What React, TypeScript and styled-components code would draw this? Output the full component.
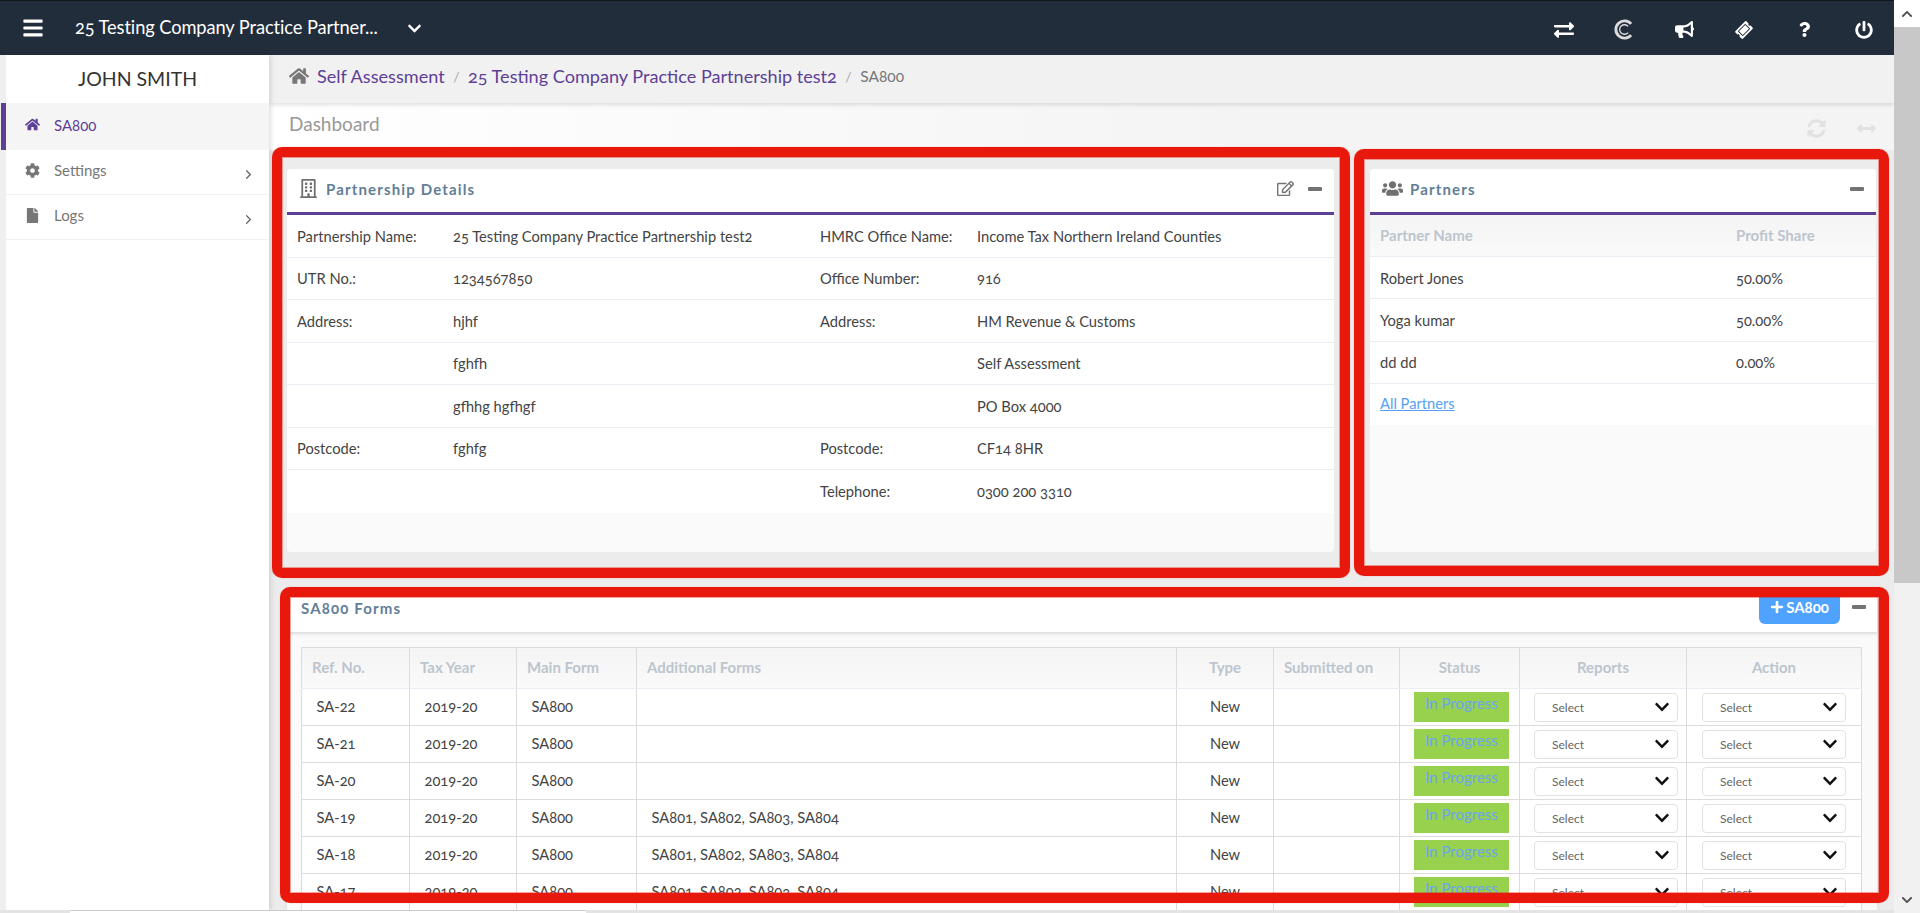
import React from "react";
import styled, { createGlobalStyle } from "styled-components";
import {
  FaBars, FaChevronDown, FaExchangeAlt, FaBullhorn, FaTicketAlt, FaQuestion, FaPowerOff,
  FaHome, FaCog, FaFile, FaRegBuilding, FaRegEdit, FaUsers,
  FaSyncAlt, FaArrowsAltH, FaPlus,
} from "react-icons/fa";
import { FiChevronRight } from "react-icons/fi";

const Global = createGlobalStyle`
  html, body { margin: 0; padding: 0; height: 100%; overflow: hidden; background: #ececec; }
  * { box-sizing: border-box; }
  body {
    font-family: "Lato", "Open Sans", sans-serif;
    font-variant-numeric: oldstyle-nums;
    font-size: 14.7px;
    color: #444;
  }
`;

const Page = styled.div`
  position: relative;
  display: flex;
  width: 1920px;
  height: 913px;
  overflow: hidden;
`;
const Viewport = styled.div`
  width: 1894px;
  height: 913px;
  display: flex;
  flex-direction: column;
`;
const TopBar = styled.header`
  height: 55px;
  flex: none;
  background: #222d3b;
  border-top: 1px solid #11161d;
  display: flex;
  align-items: center;
  color: #fff;
`;
const Burger = styled.div`
  width: 75px;
  padding-left: 22px;
  display: flex;
  align-items: center;
  font-size: 22px;
`;
const CompanyName = styled.div`
  width: 332px;
  font-size: 18.3px;
  white-space: nowrap;
  letter-spacing: -0.1px;
  padding-bottom: 2px;
`;
const CompanyCaret = styled.div`
  font-size: 15px;
  display: flex;
`;
const TopActions = styled.div`
  margin-left: auto;
  display: flex;
`;
const TopAction = styled.div<{ $rotate?: number }>`
  width: 60px;
  height: 54px;
  padding-top: 3px;
  display: flex;
  align-items: center;
  justify-content: center;
  color: #fff;
  svg { transform: rotate(${(p) => p.$rotate ?? 0}deg); }
`;

const Workspace = styled.div`
  flex: 1;
  min-height: 0;
  display: flex;
`;
const Sidebar = styled.aside`
  width: 269px;
  flex: none;
  background: #fff;
  border-left: 6px solid #efefef;
  box-shadow: 2px 0 5px rgba(0, 0, 0, 0.12);
  position: relative;
  z-index: 2;
`;
const UserName = styled.div`
  height: 48px;
  display: flex;
  align-items: center;
  justify-content: center;
  font-size: 19.5px;
  color: #333;
  padding-bottom: 2px;
`;
const NavItem = styled.div<{ $active?: boolean; $h: number }>`
  position: relative;
  height: ${(p) => p.$h}px;
  display: flex;
  align-items: center;
  padding: 0 15px 4px 19px;
  font-size: 15px;
  color: ${(p) => (p.$active ? "#5d3f95" : "#777")};
  background: ${(p) => (p.$active ? "#f5f5f5" : "#fff")};
  border-bottom: ${(p) => (p.$active ? "none" : "1px solid #f1f1f1")};
  &::before {
    content: "";
    display: ${(p) => (p.$active ? "block" : "none")};
    position: absolute;
    left: -5px;
    top: 0;
    bottom: 0;
    width: 5px;
    background: #5d3f95;
  }
`;
const NavIcon = styled.span`
  width: 29px;
  display: flex;
  font-size: 15px;
`;
const NavArrow = styled.span`
  margin-left: auto;
  display: flex;
  font-size: 15px;
  color: #666;
  padding-top: 8px;
  margin-right: -2px;
`;

const Main = styled.main`
  flex: 1;
  min-width: 0;
  overflow: hidden;
  display: flex;
  flex-direction: column;
  background: #ececec;
`;
const Breadcrumb = styled.nav`
  height: 48px;
  flex: none;
  background: #f1f1f1;
  box-shadow: 0 2px 4px rgba(0, 0, 0, 0.12);
  display: flex;
  align-items: center;
  padding: 0 0 6px 20px;
  position: relative;
  z-index: 1;
`;
const CrumbHome = styled.span`
  display: flex;
  font-size: 20px;
  color: #777;
  margin-right: 8px;
`;
const CrumbLink = styled.span`
  font-size: 18.1px;
  color: #5d3f95;
`;
const CrumbSep = styled.span`
  color: #aaa;
  font-size: 14px;
  margin: 0 8.5px;
`;
const CrumbCurrent = styled.span`
  color: #777;
  font-size: 15.5px;
`;
const TitleRow = styled.div`
  height: 47px;
  flex: none;
  display: flex;
  align-items: center;
  padding: 0 18px 7px 20px;
  background: linear-gradient(90deg, #fff, #f4f4f4 60%);
`;
const PageTitle = styled.h1`
  margin: 0;
  font-size: 19px;
  font-weight: 400;
  color: #999;
`;
const TitleTools = styled.div`
  margin-left: auto;
  display: flex;
  align-items: center;
  gap: 31px;
  padding-top: 11px;
  font-size: 19px;
  color: #e2e2e2;
  svg { display: block; }
`;

const Content = styled.div`
  padding: 19px 18px 0;
  display: flex;
  flex-direction: column;
  gap: 38px;
`;
const TopCards = styled.div`
  display: flex;
  gap: 36px;
`;
const Card = styled.section<{ $w: number }>`
  width: ${(p) => p.$w}px;
  height: 383px;
  display: flex;
  flex-direction: column;
  background: #fafafa;
  border-radius: 4px;
  overflow: hidden;
`;
const CardHeader = styled.div`
  height: 46px;
  flex: none;
  background: #fff;
  border-bottom: 3px solid #5d3f95;
  display: flex;
  align-items: center;
  padding: 0 12px 4px 12px;
`;
const CardIcon = styled.span<{ $gap: number; $size: number }>`
  display: flex;
  font-size: ${(p) => p.$size}px;
  color: #707070;
  margin-right: ${(p) => p.$gap}px;
`;
const CardTitle = styled.h2`
  margin: 0;
  font-size: 15px;
  font-weight: 700;
  letter-spacing: 1.15px;
  color: #627e96;
`;
const CardTools = styled.div`
  margin-left: auto;
  display: flex;
  align-items: center;
  gap: 14px;
  color: #737373;
  svg { display: block; }
`;
const MinusIcon = styled.span`
  display: block;
  width: 14px;
  height: 4px;
  border-radius: 1px;
  background: #737373;
`;

const DetailBody = styled.div`
  background: #fff;
`;
const DetailRow = styled.div`
  height: 42.5px;
  display: grid;
  grid-template-columns: 156px 367px 157px 1fr;
  align-items: center;
  padding-left: 10px;
  border-bottom: 1px solid #e9eef4;
  color: #444;
  &:last-child { border-bottom: none; }
`;
const DetailCell = styled.div`
  white-space: nowrap;
`;

const PartnerHead = styled.div`
  height: 42px;
  display: grid;
  grid-template-columns: 356px 1fr;
  align-items: center;
  padding: 0 0 2px 10px;
  background: linear-gradient(#f4f4f4, #fafafa);
  border-bottom: 1px solid #e9eef4;
  color: #bcc5ce;
  font-weight: 700;
  font-size: 15px;
`;
const PartnerBody = styled.div`
  background: #fff;
`;
const PartnerRow = styled.div`
  height: 42.3px;
  display: grid;
  grid-template-columns: 356px 1fr;
  align-items: center;
  padding-left: 10px;
  border-bottom: 1px solid #e9eef4;
  color: #444;
`;
const PartnersLink = styled.a`
  display: flex;
  align-items: center;
  height: 41px;
  padding: 0 0 2px 10px;
  color: #57a0f5;
  text-decoration: underline;
`;

const FormsCard = styled.section`
  width: 1590px;
  background: #fafafa;
  box-shadow: 0 0 4px rgba(0, 0, 0, 0.08);
`;
const FormsHeader = styled.div`
  height: 42px;
  background: #fff;
  box-shadow: 0 2px 3px rgba(0, 0, 0, 0.12);
  display: flex;
  padding-left: 14px;
  position: relative;
`;
const FormsTitle = styled.h2`
  margin: 9px 0 0;
  font-size: 15px;
  font-weight: 700;
  letter-spacing: 1.15px;
  color: #627e96;
`;
const AddButton = styled.button`
  margin-left: auto;
  width: 81px;
  height: 34px;
  border: none;
  border-radius: 0 0 6px 6px;
  background: #4fa3ff;
  color: #fff;
  font: 700 15px "Lato", sans-serif;
  font-variant-numeric: oldstyle-nums;
  display: flex;
  align-items: center;
  justify-content: center;
  gap: 2px;
  padding: 0;
`;
const CollapseTool = styled.div`
  width: 37px;
  height: 34px;
  display: flex;
  align-items: center;
  justify-content: center;
`;
const FormsBody = styled.div`
  padding: 15px 15px 0 14px;
`;
const FormsTable = styled.table`
  width: 1560px;
  table-layout: fixed;
  border-collapse: collapse;
  background: #fff;
`;
const Th = styled.th<{ $center?: boolean }>`
  height: 41px;
  padding: 0 10px 3px;
  text-align: ${(p) => (p.$center ? "center" : "left")};
  font-weight: 700;
  font-size: 15px;
  color: #bcc5ce;
  background: linear-gradient(#f4f4f4, #fafafa);
  border: 1px solid #dcdcdc;
  border-bottom-color: #e9eef4;
`;
const Td = styled.td<{ $center?: boolean }>`
  height: 37px;
  padding: 0 ${(p) => (p.$center ? 0 : 14.5)}px 2px;
  text-align: ${(p) => (p.$center ? "center" : "left")};
  border: 1px solid #dcdcdc;
  color: #444;
  white-space: nowrap;
`;
const WidgetTd = styled.td<{ $inset: number }>`
  height: 37px;
  padding: 0 0 0 ${(p) => p.$inset}px;
  border: 1px solid #dcdcdc;
`;
const StatusBadge = styled.div`
  width: 95px;
  height: 30px;
  background: #97d14e;
  color: #6ca4ee;
  font-size: 15px;
  line-height: 22px;
  text-align: center;
`;
const SelectBox = styled.div`
  width: 144px;
  height: 29px;
  background: #fff;
  border: 1px solid #e2e2e2;
  border-radius: 4px;
  display: flex;
  align-items: center;
  padding: 0 7px 0 17px;
  font-size: 12px;
  color: #666;
  svg { margin-left: auto; color: #111; font-size: 16px; }
`;

const HorizontalBar = styled.div`
  height: 3px;
  flex: none;
  display: flex;
  background: #e4e4e4;
  position: relative;
  z-index: 3;
`;
const HorizontalThumb = styled.div`
  width: 516px;
  margin-left: 70px;
  background: #fff;
  border-top: 1px solid #ccc;
`;
const VerticalBar = styled.div`
  width: 26px;
  height: 913px;
  flex: none;
  background: #f1f1f1;
  display: flex;
  flex-direction: column;
  align-items: center;
  color: #555;
  font-size: 12px;
`;
const ScrollArrow = styled.div<{ $up?: boolean }>`
  height: 27px;
  width: 100%;
  display: flex;
  align-items: center;
  justify-content: center;
  background: ${(p) => (p.$up ? "#fff" : "transparent")};
  svg { transform: rotate(${(p) => (p.$up ? 180 : 0)}deg); }
`;
const VerticalThumb = styled.div`
  height: 556px;
  width: 100%;
  background: #c8c8c8;
`;
const ScrollSpacer = styled.div`
  flex: 1;
`;

const Frame = styled.div<{ $l: number; $t: number; $w: number; $h: number }>`
  position: absolute;
  left: ${(p) => p.$l}px;
  top: ${(p) => p.$t}px;
  width: ${(p) => p.$w}px;
  height: ${(p) => p.$h}px;
  border: 10px solid #e8190c;
  border-radius: 10px;
  box-shadow: 0 0 1px rgba(232, 25, 12, 0.6), inset 0 0 0 1px rgba(232, 25, 12, 0.4);
  pointer-events: none;
  z-index: 5;
`;

const CopyIcon = () => (
  <svg width="23" height="23" viewBox="0 0 24 24" fill="none" stroke="#dcdcdc">
    <path d="M18.9 6.2A9 9 0 1 0 18.9 17.8" strokeWidth="3" />
    <path d="M15.8 8.8A5 5 0 1 0 15.8 15.2" strokeWidth="1.4" />
  </svg>
);

const details: [string, string, string, string][] = [
  ["Partnership Name:", "25 Testing Company Practice Partnership test2", "HMRC Office Name:", "Income Tax Northern Ireland Counties"],
  ["UTR No.:", "1234567850", "Office Number:", "916"],
  ["Address:", "hjhf", "Address:", "HM Revenue & Customs"],
  ["", "fghfh", "", "Self Assessment"],
  ["", "gfhhg hgfhgf", "", "PO Box 4000"],
  ["Postcode:", "fghfg", "Postcode:", "CF14 8HR"],
  ["", "", "Telephone:", "0300 200 3310"],
];
const partners = [
  ["Robert Jones", "50.00%"],
  ["Yoga kumar", "50.00%"],
  ["dd dd", "0.00%"],
];
const columns: { label: string; w: number; center?: boolean }[] = [
  { label: "Ref. No.", w: 108 },
  { label: "Tax Year", w: 107 },
  { label: "Main Form", w: 120 },
  { label: "Additional Forms", w: 540 },
  { label: "Type", w: 97, center: true },
  { label: "Submitted on", w: 126 },
  { label: "Status", w: 120, center: true },
  { label: "Reports", w: 167, center: true },
  { label: "Action", w: 175, center: true },
];
const forms = [
  ["SA-22", ""],
  ["SA-21", ""],
  ["SA-20", ""],
  ["SA-19", "SA801, SA802, SA803, SA804"],
  ["SA-18", "SA801, SA802, SA803, SA804"],
  ["SA-17", "SA801, SA802, SA803, SA804"],
];

export default function App() {
  return (
    <Page>
      <Global />
      <Viewport>
        <TopBar>
          <Burger><FaBars /></Burger>
          <CompanyName>25 Testing Company Practice Partner...</CompanyName>
          <CompanyCaret><FaChevronDown /></CompanyCaret>
          <TopActions>
            <TopAction><FaExchangeAlt size={20} /></TopAction>
            <TopAction><CopyIcon /></TopAction>
            <TopAction><FaBullhorn size={19} /></TopAction>
            <TopAction $rotate={-45}><FaTicketAlt size={16} /></TopAction>
            <TopAction><FaQuestion size={15} /></TopAction>
            <TopAction><FaPowerOff size={18} /></TopAction>
          </TopActions>
        </TopBar>
        <Workspace>
          <Sidebar>
            <UserName>JOHN SMITH</UserName>
            <NavItem $active $h={47}><NavIcon><FaHome /></NavIcon>SA800</NavItem>
            <NavItem $h={45}><NavIcon><FaCog /></NavIcon>Settings<NavArrow><FiChevronRight /></NavArrow></NavItem>
            <NavItem $h={45}><NavIcon><FaFile /></NavIcon>Logs<NavArrow><FiChevronRight /></NavArrow></NavItem>
          </Sidebar>
          <Main>
            <Breadcrumb>
              <CrumbHome><FaHome /></CrumbHome>
              <CrumbLink>Self Assessment</CrumbLink>
              <CrumbSep>/</CrumbSep>
              <CrumbLink>25 Testing Company Practice Partnership test2</CrumbLink>
              <CrumbSep>/</CrumbSep>
              <CrumbCurrent>SA800</CrumbCurrent>
            </Breadcrumb>
            <TitleRow>
              <PageTitle>Dashboard</PageTitle>
              <TitleTools><FaSyncAlt /><FaArrowsAltH /></TitleTools>
            </TitleRow>
            <Content>
              <TopCards>
                <Card $w={1047}>
                  <CardHeader>
                    <CardIcon $gap={8} $size={19}><FaRegBuilding /></CardIcon>
                    <CardTitle>Partnership Details</CardTitle>
                    <CardTools><FaRegEdit size={17} /><MinusIcon /></CardTools>
                  </CardHeader>
                  <DetailBody>
                    {details.map((row, i) => (
                      <DetailRow key={i}>
                        {row.map((cell, j) => <DetailCell key={j}>{cell}</DetailCell>)}
                      </DetailRow>
                    ))}
                  </DetailBody>
                </Card>
                <Card $w={506}>
                  <CardHeader>
                    <CardIcon $gap={7} $size={21}><FaUsers /></CardIcon>
                    <CardTitle>Partners</CardTitle>
                    <CardTools><MinusIcon /></CardTools>
                  </CardHeader>
                  <PartnerHead><span>Partner Name</span><span>Profit Share</span></PartnerHead>
                  <PartnerBody>
                    {partners.map(([name, share]) => (
                      <PartnerRow key={name}><span>{name}</span><span>{share}</span></PartnerRow>
                    ))}
                    <PartnersLink>All Partners</PartnersLink>
                  </PartnerBody>
                </Card>
              </TopCards>
              <FormsCard>
                <FormsHeader>
                  <FormsTitle>SA800 Forms</FormsTitle>
                  <AddButton><FaPlus size={14} />SA800</AddButton>
                  <CollapseTool><MinusIcon /></CollapseTool>
                </FormsHeader>
                <FormsBody>
                  <FormsTable>
                    <colgroup>
                      {columns.map((c) => <col key={c.label} style={{ width: c.w }} />)}
                    </colgroup>
                    <thead>
                      <tr>
                        {columns.map((c) => <Th key={c.label} $center={c.center}>{c.label}</Th>)}
                      </tr>
                    </thead>
                    <tbody>
                      {forms.map(([ref, extra]) => (
                        <tr key={ref}>
                          <Td>{ref}</Td>
                          <Td>2019-20</Td>
                          <Td>SA800</Td>
                          <Td>{extra}</Td>
                          <Td $center>New</Td>
                          <Td />
                          <WidgetTd $inset={14}><StatusBadge>In Progress</StatusBadge></WidgetTd>
                          <WidgetTd $inset={14}><SelectBox>Select<FaChevronDown /></SelectBox></WidgetTd>
                          <WidgetTd $inset={15}><SelectBox>Select<FaChevronDown /></SelectBox></WidgetTd>
                        </tr>
                      ))}
                    </tbody>
                  </FormsTable>
                </FormsBody>
              </FormsCard>
            </Content>
          </Main>
        </Workspace>
        <HorizontalBar><HorizontalThumb /></HorizontalBar>
      </Viewport>
      <VerticalBar>
        <ScrollArrow $up><FaChevronDown /></ScrollArrow>
        <VerticalThumb />
        <ScrollSpacer />
        <ScrollArrow><FaChevronDown /></ScrollArrow>
      </VerticalBar>
      <Frame $l={272} $t={147} $w={1078} $h={431} />
      <Frame $l={1354} $t={149} $w={535} $h={427} />
      <Frame $l={280} $t={587} $w={1609} $h={316} />
    </Page>
  );
}
